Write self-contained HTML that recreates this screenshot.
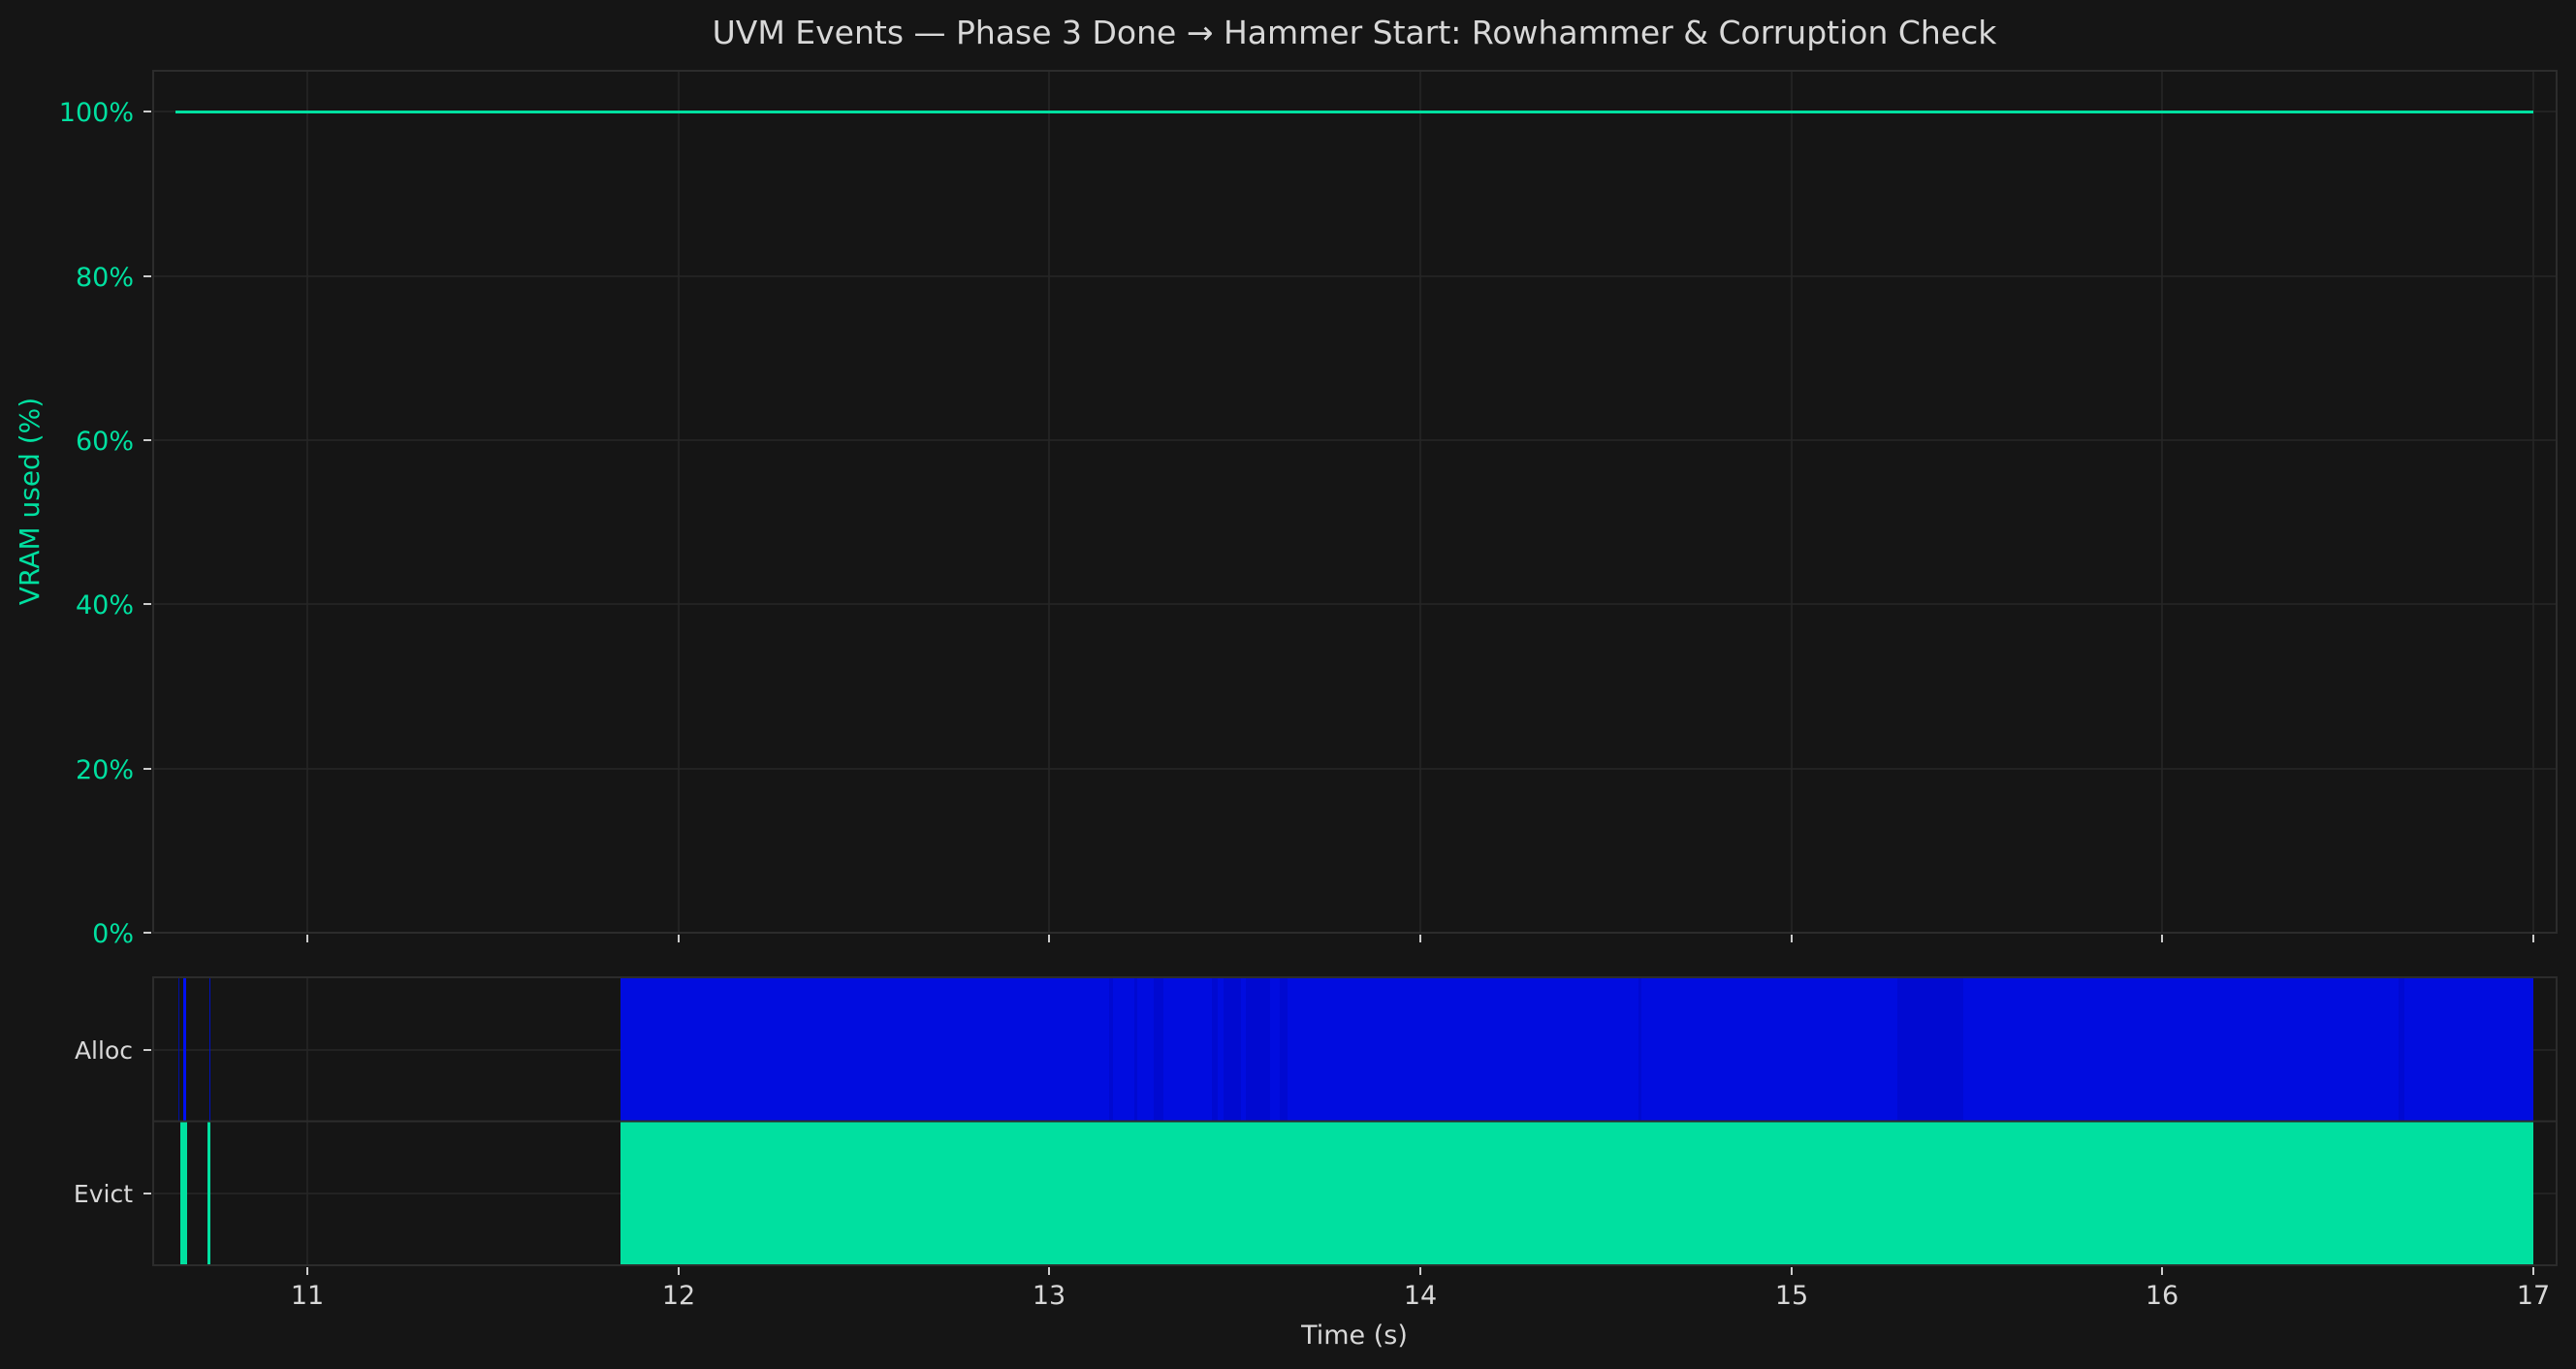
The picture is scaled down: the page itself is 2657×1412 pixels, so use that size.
<!DOCTYPE html>
<html><head><meta charset="utf-8"><style>
html,body{margin:0;padding:0;background:#151515;}
svg{display:block;}
text{font-family:"DejaVu Sans","Liberation Sans",sans-serif;}
</style></head><body>
<svg width="2657" height="1412" viewBox="0 0 2657 1412" xmlns="http://www.w3.org/2000/svg">
<rect width="2657" height="1412" fill="#151515"/>
<text x="1397" y="45" fill="#d8d8d8" font-size="33" text-anchor="middle">UVM Events — Phase 3 Done → Hammer Start: Rowhammer &amp; Corruption Check</text>
<g stroke="#262626" stroke-width="1.5">
<line x1="317" y1="73" x2="317" y2="962"/><line x1="700" y1="73" x2="700" y2="962"/><line x1="1082" y1="73" x2="1082" y2="962"/><line x1="1465" y1="73" x2="1465" y2="962"/><line x1="1848" y1="73" x2="1848" y2="962"/><line x1="2230" y1="73" x2="2230" y2="962"/><line x1="2613" y1="73" x2="2613" y2="962"/>
<line x1="158" y1="115" x2="2637" y2="115"/><line x1="158" y1="285" x2="2637" y2="285"/><line x1="158" y1="454" x2="2637" y2="454"/><line x1="158" y1="623" x2="2637" y2="623"/><line x1="158" y1="793" x2="2637" y2="793"/>
</g>
<rect x="158" y="73" width="2479" height="889" fill="none" stroke="#2c2c2c" stroke-width="2"/>
<line x1="181" y1="115.5" x2="2613" y2="115.5" stroke="#00e0a0" stroke-width="3"/>
<g stroke="#cccccc" stroke-width="2">
<line x1="148" y1="115" x2="156" y2="115"/><line x1="148" y1="285" x2="156" y2="285"/><line x1="148" y1="454" x2="156" y2="454"/><line x1="148" y1="623" x2="156" y2="623"/><line x1="148" y1="793" x2="156" y2="793"/><line x1="148" y1="962" x2="156" y2="962"/>
<line x1="317" y1="964" x2="317" y2="972"/><line x1="700" y1="964" x2="700" y2="972"/><line x1="1082" y1="964" x2="1082" y2="972"/><line x1="1465" y1="964" x2="1465" y2="972"/><line x1="1848" y1="964" x2="1848" y2="972"/><line x1="2230" y1="964" x2="2230" y2="972"/><line x1="2613" y1="964" x2="2613" y2="972"/>
</g>
<g fill="#00e0a0" font-size="27" text-anchor="end">
<text x="138" y="125">100%</text><text x="138" y="295">80%</text><text x="138" y="464">60%</text><text x="138" y="633">40%</text><text x="138" y="803">20%</text><text x="138" y="972">0%</text>
</g>
<text transform="translate(40,517) rotate(-90)" fill="#00e0a0" font-size="28" text-anchor="middle">VRAM used (%)</text>
<g stroke="#262626" stroke-width="1.5">
<line x1="317" y1="1008" x2="317" y2="1305"/><line x1="700" y1="1008" x2="700" y2="1305"/><line x1="1082" y1="1008" x2="1082" y2="1305"/><line x1="1465" y1="1008" x2="1465" y2="1305"/><line x1="1848" y1="1008" x2="1848" y2="1305"/><line x1="2230" y1="1008" x2="2230" y2="1305"/>
<line x1="158" y1="1083" x2="2637" y2="1083"/><line x1="158" y1="1231" x2="2637" y2="1231"/>
</g>
<rect x="640" y="1009" width="1973" height="147" fill="#000ce0"/>
<g fill="#0008c8" opacity="0.6">
<rect x="1144" y="1009" width="4" height="147"/><rect x="1170" y="1009" width="3" height="147"/><rect x="1190" y="1009" width="10" height="147"/><rect x="1250" y="1009" width="6" height="147"/><rect x="1262" y="1009" width="18" height="147"/><rect x="1285" y="1009" width="25" height="147"/><rect x="1320" y="1009" width="8" height="147"/><rect x="1690" y="1009" width="3" height="147"/><rect x="1957" y="1009" width="68" height="147"/><rect x="2474" y="1009" width="6" height="147"/>
</g>
<rect x="640" y="1157" width="1973" height="148" fill="#00e0a0"/>
<rect x="189" y="1009" width="3" height="147" fill="#0010f0"/>
<rect x="216" y="1009" width="1" height="147" fill="#0010c0"/>
<rect x="184" y="1009" width="1" height="147" fill="#0010a0"/>
<rect x="186" y="1157" width="7" height="148" fill="#00e0a0"/>
<rect x="214" y="1157" width="3" height="148" fill="#00e0a0"/>
<line x1="158" y1="1156.5" x2="2637" y2="1156.5" stroke="#2c2c2c" stroke-width="2"/>
<rect x="158" y="1008" width="2479" height="297" fill="none" stroke="#2c2c2c" stroke-width="2"/>
<g stroke="#cccccc" stroke-width="2">
<line x1="148" y1="1083" x2="156" y2="1083"/><line x1="148" y1="1231" x2="156" y2="1231"/>
<line x1="317" y1="1307" x2="317" y2="1315"/><line x1="700" y1="1307" x2="700" y2="1315"/><line x1="1082" y1="1307" x2="1082" y2="1315"/><line x1="1465" y1="1307" x2="1465" y2="1315"/><line x1="1848" y1="1307" x2="1848" y2="1315"/><line x1="2230" y1="1307" x2="2230" y2="1315"/><line x1="2613" y1="1307" x2="2613" y2="1315"/>
</g>
<g fill="#d8d8d8" font-size="25" text-anchor="end">
<text x="137" y="1092">Alloc</text><text x="137" y="1240">Evict</text>
</g>
<g fill="#d8d8d8" font-size="27" text-anchor="middle">
<text x="317" y="1345">11</text><text x="700" y="1345">12</text><text x="1082" y="1345">13</text><text x="1465" y="1345">14</text><text x="1848" y="1345">15</text><text x="2230" y="1345">16</text><text x="2613" y="1345">17</text>
<text x="1397" y="1386">Time (s)</text>
</g>
</svg>
</body></html>
